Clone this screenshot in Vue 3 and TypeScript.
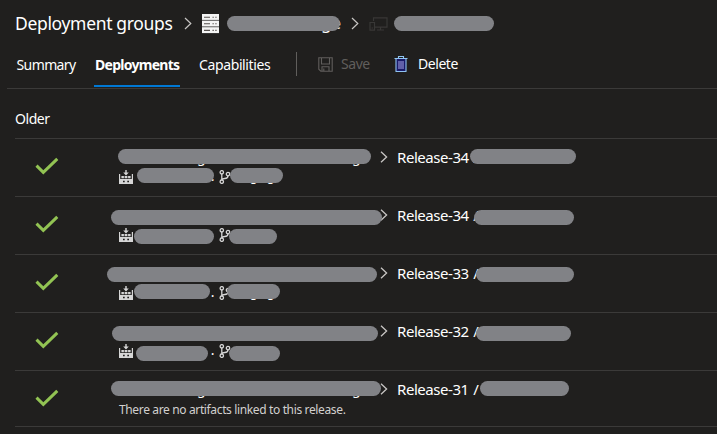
<script setup lang="ts">
interface Mask {
  x: number
  y: number
  w: number
}

interface Peek {
  text: string
  x: number
  y: number
  small?: boolean
}

interface Deployment {
  id: number
  release: string
  artifacts: boolean
  dot: boolean
  masks: Mask[]
  peeks: Peek[]
}

const deployments: Deployment[] = [
  {
    id: 1,
    release: 'Release-34',
    artifacts: true,
    dot: true,
    masks: [
      { x: 118.4, y: 10, w: 253 },
      { x: 469.6, y: 10, w: 106.3 },
      { x: 137.4, y: 29, w: 77 },
      { x: 229.6, y: 29, w: 53.3 },
    ],
    peeks: [
      { text: 'g', x: 197, y: 8 },
      { text: 'g', x: 352, y: 8 },
      { text: 'g', x: 250, y: 30, small: true },
      { text: 'g', x: 267, y: 30, small: true },
    ],
  },
  {
    id: 2,
    release: 'Release-34',
    artifacts: true,
    dot: false,
    masks: [
      { x: 111.4, y: 13, w: 270.5 },
      { x: 474.4, y: 13, w: 100 },
      { x: 134.4, y: 32, w: 80 },
      { x: 228.6, y: 32, w: 48.8 },
    ],
    peeks: [],
  },
  {
    id: 3,
    release: 'Release-33',
    artifacts: true,
    dot: true,
    masks: [
      { x: 107.4, y: 12, w: 269.5 },
      { x: 476, y: 12, w: 98.4 },
      { x: 134.4, y: 29, w: 76 },
      { x: 226.6, y: 29, w: 53.8 },
    ],
    peeks: [
      { text: 'g', x: 250, y: 30, small: true },
      { text: 'g', x: 267, y: 30, small: true },
    ],
  },
  {
    id: 4,
    release: 'Release-32',
    artifacts: true,
    dot: true,
    masks: [
      { x: 112.4, y: 13, w: 266 },
      { x: 475.6, y: 13, w: 95.8 },
      { x: 135.6, y: 33, w: 72.8 },
      { x: 228.6, y: 33, w: 51.3 },
    ],
    peeks: [],
  },
  {
    id: 5,
    release: 'Release-31',
    artifacts: false,
    dot: false,
    masks: [
      { x: 111.4, y: 10, w: 270 },
      { x: 479.6, y: 10, w: 89.8 },
    ],
    peeks: [
      { text: 'g', x: 197, y: 8 },
      { text: 'g', x: 352, y: 8 },
    ],
  },
]

const maskStyle = (m: Mask) => ({ left: `${m.x - 15}px`, top: `${m.y}px`, width: `${m.w}px` })
const peekStyle = (p: Peek) => ({ left: `${p.x - 15}px`, top: `${p.y}px` })
</script>

<template>
  <main class="page">
    <header class="crumbs">
      <h1 class="title">Deployment groups</h1>
      <svg class="crumb-chevron" viewBox="0 0 8 13"><path d="M1 1L6.8 6.5L1 12" /></svg>
      <svg class="servers" viewBox="0 0 17 20">
        <g v-for="n in 3" :key="n" :transform="`translate(0 ${(n - 1) * 6.6})`">
          <rect width="17" height="5.9" fill="#f4f4f4" />
          <path d="M2 3.2h6M10.5 3.2h1.3M13.3 3.2h1.3" stroke="#55504e" stroke-width="1.1" />
        </g>
      </svg>
      <span class="group-name"><span class="tail">ge</span><i class="mask"></i></span>
      <svg class="crumb-chevron" viewBox="0 0 8 13"><path d="M1 1L6.8 6.5L1 12" /></svg>
      <svg class="device" viewBox="0 0 19 14">
        <path d="M4.5 4V.8H18v9.4H6M8 13h7M11.5 10.2V13M1 5.5h4.5v7.7H1zM2.5 11h1.5" />
      </svg>
      <i class="mask target-name"></i>
    </header>

    <nav class="tabs">
      <a class="tab summary">Summary</a>
      <a class="tab active"><span>Deployments</span></a>
      <a class="tab capabilities">Capabilities</a>
      <i class="divider"></i>
      <button class="command save" disabled>
        <svg viewBox="0 0 15 15">
          <path d="M.8 .8H14.2V14.2H2.8L.8 12.2zM3.5 1V7H11.5V1M4 14V9.8H11V14M5.8 11.5V14" />
        </svg>
        <span>Save</span>
      </button>
      <button class="command delete">
        <svg viewBox="0 0 14 17">
          <path class="can" d="M2 3V15.5H12V3" />
          <path d="M.5 2.5H13.5M4.5 2.5V.5H9.5V2.5" />
          <path class="ribs" d="M5 5V13M7 5V13M9 5V13" />
        </svg>
        <span>Delete</span>
      </button>
    </nav>

    <section class="history">
      <h2>Older</h2>
      <ul>
        <li v-for="d in deployments" :key="d.id" class="row">
          <svg class="check" viewBox="0 0 24 18"><path d="M1.5 8.7L8.3 15.3L22.3 1.8" /></svg>
          <div class="details">
            <div class="release-line">
              <svg class="chevron" viewBox="0 0 8 12"><path d="M1 .8L6.6 6L1 11.2" /></svg>
              <span class="release">{{ d.release }} <span class="slash">/</span></span>
            </div>
            <div v-if="d.artifacts" class="artifact-line">
              <svg class="build" viewBox="0 0 14 14">
                <path d="M.6 4V13.4H13.4V4" fill="none" stroke="#d6d6d6" stroke-width="1.2" />
                <path d="M6.3 0H7.7V2.6H9.8L7 5.4L4.2 2.6H6.3z" />
                <path d="M2.4 6H4.9V8.2H2.4zM5.6 6H8.4V8.2H5.6zM9.1 6H11.6V8.2H9.1zM1 9H13V14H1z" />
                <path d="M4 10.7H5.7V12.2H4zM8.3 10.7H10V12.2H8.3z" fill="#201f1e" />
              </svg>
              <span class="dot">{{ d.dot ? '.' : '' }}</span>
              <svg class="branch" viewBox="0 0 12 14">
                <circle cx="2.8" cy="2.3" r="1.7" />
                <circle cx="2.8" cy="11.7" r="1.7" />
                <circle cx="9" cy="4.1" r="1.7" />
                <path d="M2.8 4V10M9 5.8Q9 8.5 5.8 8.5Q3.2 8.5 2.8 10" />
              </svg>
            </div>
            <p v-else class="empty">There are no artifacts linked to this release.</p>
          </div>
          <span
            v-for="(p, i) in d.peeks"
            :key="`p${i}`"
            class="peek"
            :class="{ small: p.small }"
            :style="peekStyle(p)"
          >{{ p.text }}</span>
          <i v-for="(m, i) in d.masks" :key="`m${i}`" class="mask over" :style="maskStyle(m)"></i>
        </li>
      </ul>
    </section>
  </main>
</template>

<style>
body {
  background: #201f1e;
}
</style>

<style scoped>
.page {
  box-sizing: border-box;
  width: 717px;
  height: 434px;
  overflow: hidden;
  background: #201f1e;
  color: #fff;
  font-family: 'Noto Sans', 'Open Sans', sans-serif;
  font-size: 14px;
}

svg {
  display: block;
  flex: none;
  fill: none;
}

.crumbs {
  display: flex;
  align-items: center;
  height: 47px;
  padding-left: 15px;
}

.title {
  width: 169px;
  margin: 0;
  padding-bottom: 2px;
  font-size: 17.5px;
  font-weight: 400;
  line-height: 24px;
  letter-spacing: -0.33px;
  white-space: nowrap;
}

.crumb-chevron {
  width: 8px;
  height: 13px;
  stroke: #c8c6c4;
  stroke-width: 1.2;
}

.servers {
  width: 17px;
  height: 20px;
  margin-left: 10px;
}

.mask {
  display: block;
  height: 15px;
  border-radius: 8px;
  background: #818286;
}

.group-name {
  position: relative;
  width: 113px;
  height: 15px;
  margin: 0 11px 0 8px;
}

.group-name .mask {
  position: relative;
  width: 112.5px;
}

.tail {
  position: absolute;
  right: -1px;
  top: -5px;
  font-size: 17px;
  line-height: 24px;
}

.device {
  width: 19px;
  height: 14px;
  margin-left: 9.5px;
  stroke: #383736;
  stroke-width: 1.2;
}

.target-name {
  width: 99.5px;
  margin-left: 6.5px;
}

.tabs {
  display: flex;
  box-sizing: border-box;
  height: 42px;
  margin-left: 7px;
  border-bottom: 1px solid #3b3a39;
  line-height: 18px;
}

.tab {
  box-sizing: border-box;
  padding-top: 9px;
  white-space: nowrap;
}

.summary {
  width: 87px;
  padding-left: 9.5px;
  letter-spacing: -0.6px;
}

.active {
  width: 86px;
  height: 40px;
  padding-left: 1px;
  border-bottom: 2px solid #0078d4;
  font-weight: 700;
  letter-spacing: -0.72px;
}

.capabilities {
  width: 116px;
  padding-left: 19px;
  letter-spacing: -0.38px;
}

.divider {
  width: 1px;
  height: 24px;
  margin-top: 5px;
  background: #605e5c;
}

.command {
  display: flex;
  align-items: center;
  height: 20px;
  margin: 7px 0 0;
  padding: 0;
  border: 0;
  background: none;
  color: #fff;
  font: inherit;
  line-height: 18px;
  letter-spacing: -0.45px;
}

.save {
  gap: 8px;
  width: 76px;
  margin-left: 21px;
  color: #605e5c;
}

.save svg {
  width: 15px;
  height: 15px;
  stroke: #605e5c;
  stroke-width: 1.1;
}

.delete {
  gap: 10px;
}

.delete svg {
  width: 14px;
  height: 17px;
  stroke: #8fc4f2;
  stroke-width: 1.1;
}

.delete .can {
  fill: #1a1a68;
}

.delete .ribs {
  stroke: #b9b8fa;
  stroke-width: 0.9;
}

h2 {
  margin: 0;
  padding: 21px 0 10px;
  font-size: 14px;
  font-weight: 400;
  line-height: 18px;
  letter-spacing: -0.45px;
}

.history {
  padding-left: 15px;
}

ul {
  margin: 0;
  padding: 0;
  list-style: none;
}

.row {
  position: relative;
  display: flex;
  box-sizing: border-box;
  height: 58px;
  border-top: 1px solid #3b3a39;
}

.row:last-child {
  height: 57px;
  border-bottom: 1px solid #3b3a39;
}

.check {
  width: 24px;
  height: 18px;
  margin: 18px 60px 0 20px;
  stroke: #92c353;
  stroke-width: 3;
}

.release-line {
  display: flex;
  align-items: center;
  height: 20px;
  margin-top: 8px;
  padding-left: 260.5px;
}

.chevron {
  width: 8px;
  height: 12px;
  margin-right: 9.5px;
  stroke: #c8c6c4;
  stroke-width: 1.3;
}

.release {
  font-size: 15px;
  line-height: 20px;
  letter-spacing: -0.45px;
  white-space: nowrap;
}

.slash {
  margin-left: 1px;
}

.artifact-line {
  display: flex;
  height: 16px;
  margin-top: 2px;
}

.build {
  width: 14px;
  height: 14px;
  margin-top: 1px;
  fill: #d6d6d6;
}

.dot {
  width: 85.5px;
  text-align: right;
  line-height: 14px;
  padding-right: 4px;
  box-sizing: border-box;
}

.branch {
  width: 12px;
  height: 14px;
  margin-top: 1px;
  stroke: #d6d6d6;
  stroke-width: 1.3;
}

.empty {
  margin: 3px 0 0;
  color: #d2d0ce;
  font-size: 12px;
  line-height: 16px;
  letter-spacing: -0.36px;
  white-space: nowrap;
}

.peek {
  position: absolute;
  font-size: 14px;
  line-height: 20px;
}

.peek.small {
  font-size: 12px;
  line-height: 16px;
}

.over {
  position: absolute;
}
</style>
